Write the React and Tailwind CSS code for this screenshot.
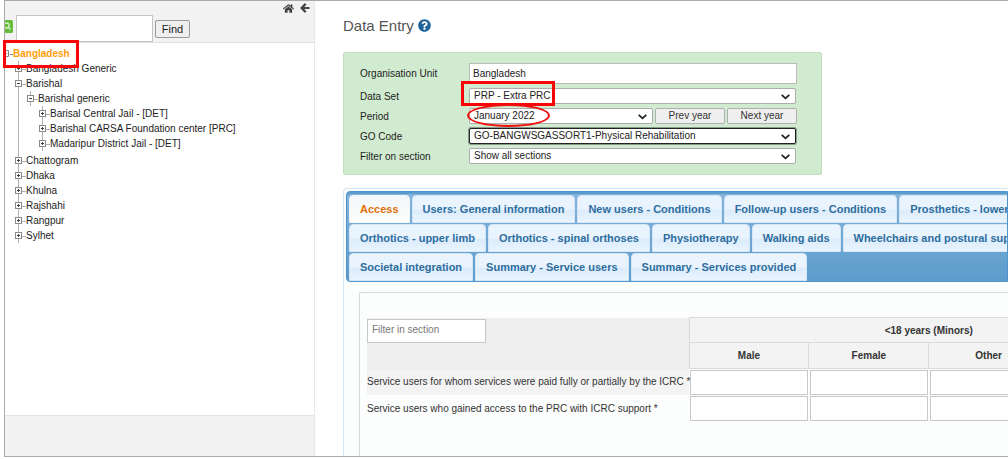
import React from "react";
import { FaHome, FaQuestionCircle } from "react-icons/fa";

const tree = [
  { name: "Bangladesh Generic" },
  {
    name: "Barishal",
    children: [
      {
        name: "Barishal generic",
        children: [
          { name: "Barisal Central Jail - [DET]" },
          { name: "Barishal CARSA Foundation center [PRC]" },
          { name: "Madaripur District Jail - [DET]" },
        ],
      },
    ],
  },
  { name: "Chattogram" },
  { name: "Dhaka" },
  { name: "Khulna" },
  { name: "Rajshahi" },
  { name: "Rangpur" },
  { name: "Sylhet" },
];

const tabRows = [
  ["Access", "Users: General information", "New users - Conditions", "Follow-up users - Conditions", "Prosthetics - lower limb"],
  ["Orthotics - upper limb", "Orthotics - spinal orthoses", "Physiotherapy", "Walking aids", "Wheelchairs and postural support"],
  ["Societal integration", "Summary - Service users", "Summary - Services provided"],
];

const columns = ["Male", "Female", "Other", "Total"];

const dataRows = [
  "Service users for whom services were paid fully or partially by the ICRC *",
  "Service users who gained access to the PRC with ICRC support *",
];

function Toggle({ open }) {
  return (
    <svg className="shrink-0" width="11" height="15" viewBox="0 0 11 15" fill="none" stroke="#8a8a8a" aria-hidden="true">
      <path d="M3.5 0V4M3.5 11V15M7 8.5H11" stroke="#b0b0b0" />
      <rect x="0.5" y="4.5" width="6" height="6" fill="#fff" />
      <path d={open ? "M2 7.5H5" : "M2 7.5H5M3.5 6V9"} stroke="#444" />
    </svg>
  );
}

function TreeNode({ node }) {
  return (
    <li>
      <div className="flex h-[15px] items-center whitespace-nowrap">
        <button type="button" aria-label={"Toggle " + node.name} className="flex">
          <Toggle open={Boolean(node.children)} />
        </button>
        <a href="#unit">{node.name}</a>
      </div>
      {node.children && (
        <ul className="pb-px pl-3">
          {node.children.map((c) => (
            <TreeNode key={c.name} node={c} />
          ))}
        </ul>
      )}
    </li>
  );
}

function Sidebar() {
  return (
    <aside className="flex w-[310px] shrink-0 flex-col border-r border-[#e8e8e8] bg-white">
      <div className="h-[42px] border-b border-[#e0e0e0] bg-[#f2f2f2]">
        <div className="flex h-3.5 items-center justify-end gap-1.5 pr-1 text-[#444]">
          <a href="#home" aria-label="Home"><FaHome size={11} /></a>
          <a href="#back" aria-label="Hide menu">
            <svg width="10" height="10" viewBox="0 0 10 10" fill="none" stroke="currentColor" strokeWidth="2.200" aria-hidden="true">
              <path d="M5.700 0.900L1.600 5L5.700 9.100M1.800 5H9.500" />
            </svg>
          </a>
        </div>
        <form className="flex items-center" onSubmit={(e) => e.preventDefault()}>
          <svg width="8" height="13" viewBox="0 0 8 13" className="mb-1 shrink-0" aria-hidden="true">
            <path d="M0 0H6.500Q8 0 8 1.500V11.500Q8 13 6.500 13H0Z" fill="#66bd3c" />
            <circle cx="1.500" cy="5.500" r="2.500" fill="none" stroke="#d8f0c8" strokeWidth="1.300" />
            <path d="M3.500 7.500L5.500 9.500" stroke="#d8f0c8" strokeWidth="1.300" />
          </svg>
          <input aria-label="Search organisation units" className="ml-[3px] h-[27px] w-[137px] border border-[#c4c4c4] bg-white px-1 outline-none" />
          <button type="submit" className="ml-0.5 h-[18px] w-[35px] rounded-xs border border-[#999] bg-[#efefef] text-[11px] leading-4 text-[#222]">
            Find
          </button>
        </form>
      </div>
      <nav aria-label="Organisation units" className="flex-1 pt-[3px] text-[#222]">
        <div className="relative flex h-[15px] items-center">
          <svg className="shrink-0" width="8" height="15" viewBox="0 0 8 15" fill="none" stroke="#858585" aria-hidden="true">
            <path d="M0 4.500H3.500V10.500H0M0 7.500H2M5 8.500H8" />
          </svg>
          <a href="#unit" className="font-bold text-[#ff9d0a]">Bangladesh</a>
          <span className="pointer-events-none absolute -left-0.5 -top-1.5 z-10 h-7 w-[76px] border-3 border-[#fa0505]" />
        </div>
        <div className="relative pl-2.5">
          <span className="absolute bottom-2 left-[13px] top-0 w-px bg-[#b0b0b0]" />
          <ul className="relative">
            {tree.map((n) => (
              <TreeNode key={n.name} node={n} />
            ))}
          </ul>
        </div>
      </nav>
      <div className="h-[41px] border-t border-[#e4e4e4] bg-[#f2f2f2]" />
    </aside>
  );
}

function Select({ id, value, focused, className }) {
  return (
    <div className={"relative " + (className || "w-[327px]")}>
      <select
        id={id}
        defaultValue={value}
        className={
          "block h-4 w-full appearance-none rounded-xs border bg-white pl-1 leading-[14px] text-[#222] outline-none " +
          (focused ? "border-[#222] ring-1 ring-[#222]/40" : "border-[#adadad]")
        }
      >
        <option>{value}</option>
      </select>
      <svg className="pointer-events-none absolute right-1.5 top-1.5" width="9" height="6" viewBox="0 0 9 6" fill="none" stroke="#222" strokeWidth="1.800" aria-hidden="true">
        <path d="M0.700 0.800L4.500 4.300L8.300 0.800" />
      </svg>
    </div>
  );
}

function Row({ id, label, children }) {
  return (
    <div className="flex items-center">
      <label htmlFor={id} className="w-[109px] shrink-0">{label}</label>
      {children}
    </div>
  );
}

function EntryForm() {
  const yearButton = "h-4 w-[70px] rounded-xs border border-[#b0b0b0] bg-[#efefef] leading-[14px] text-[#333]";
  return (
    <form
      className="mt-4 flex w-[479px] flex-col gap-1 rounded-xs border border-[#bfe0bf] bg-[#d0ebd0] pb-2.5 pl-4 pt-2.5 text-[#222]"
      onSubmit={(e) => e.preventDefault()}
    >
      <Row id="unit" label="Organisation Unit">
        <input id="unit" readOnly defaultValue="Bangladesh" className="h-[21px] w-[328px] border border-[#bbb] bg-white px-[3px] outline-none" />
      </Row>
      <Row id="dataset" label="Data Set">
        <div className="relative">
          <Select id="dataset" value="PRP - Extra PRC" />
          <span className="pointer-events-none absolute -left-2 -top-[7px] h-[25px] w-[94px] border-3 border-[#fa0505]" />
        </div>
      </Row>
      <Row id="period" label="Period">
        <div className="relative flex gap-0.5">
          <Select id="period" value="January 2022" className="w-[184px]" />
          <button type="button" className={yearButton}>Prev year</button>
          <button type="button" className={yearButton}>Next year</button>
          <span className="pointer-events-none absolute -left-0.5 -top-1 h-[23px] w-[83px] rounded-[50%] border-2 border-[#f01010]" />
        </div>
      </Row>
      <Row id="gocode" label="GO Code">
        <Select id="gocode" value="GO-BANGWSGASSORT1-Physical Rehabilitation" focused />
      </Row>
      <Row id="section" label="Filter on section">
        <Select id="section" value="Show all sections" />
      </Row>
    </form>
  );
}

function Tabs() {
  return (
    <div role="tablist" className="flex flex-col gap-px overflow-hidden rounded-l border border-[#4f94cc] bg-linear-to-b from-[#84b4dc] to-[#5c9ccc] pl-0.5 pt-[3px] text-[11px] font-bold shadow-[inset_0_2px_0_#5c9ccc]">
      {tabRows.map((row) => (
        <div key={row[0]} className="flex gap-0.5">
          {row.map((t) => (
            <button
              key={t}
              type="button"
              role="tab"
              aria-selected={t === "Access"}
              className={
                "h-7 shrink-0 whitespace-nowrap rounded-t border px-2.5 " +
                (t === "Access"
                  ? "border-[#f5f8f9] bg-linear-to-b from-[#f3f7f9] to-[#fcfdfd] text-[#e17009]"
                  : "border-[#d5e6f5] bg-linear-to-b from-[#e9f4fe] from-50% via-[#dcecfc] via-55% to-[#e9f4fe] text-[#2e6e9e]")
              }
            >
              {t}
            </button>
          ))}
        </div>
      ))}
    </div>
  );
}

function DataTable() {
  return (
    <table className="w-[802px] table-fixed border-collapse text-[#333]">
      <colgroup>
        <col className="w-[322px]" />
        <col />
        <col />
        <col />
        <col />
      </colgroup>
      <thead>
        <tr className="h-[25px]">
          <td rowSpan={2} className="bg-[#eee] p-0 align-top">
            <input aria-label="Filter in section" placeholder="Filter in section" className="mt-px block h-6 w-[119px] border border-[#c8c8c8] bg-white px-1 pb-0.5 outline-none placeholder:text-[#777]" />
          </td>
          <th colSpan={4} className="border border-[#dadada] bg-[#f3f3f3] p-0">&lt;18 years (Minors)</th>
        </tr>
        <tr className="h-[26px]">
          {columns.map((c) => (
            <th key={c} className="border border-[#dadada] bg-[#f3f3f3] p-0">{c}</th>
          ))}
        </tr>
      </thead>
      <tbody>
        {dataRows.map((r, i) => (
          <tr key={r} className="h-[26px]">
            <td className={"whitespace-nowrap p-0 " + (i === 0 ? "bg-[#f3f3f3]" : "")}>{r}</td>
            {columns.map((c) => (
              <td key={c} className="p-0 pl-px pt-px">
                <input aria-label={r + " " + c} className="block h-[25px] w-[118px] border border-[#c8c8c8] bg-white outline-none" />
              </td>
            ))}
          </tr>
        ))}
      </tbody>
    </table>
  );
}

export default function App() {
  return (
    <div className="flex h-screen flex-col bg-white pb-0.5 pl-1 font-['Liberation_Sans',Arial,sans-serif] text-[10px] leading-[15px]">
      <div className="flex min-h-0 flex-1 border-b border-l border-t border-[#aaa]">
        <Sidebar />
        <main className="flex min-w-0 flex-1 flex-col overflow-hidden pl-7 pt-3.5">
          <h1 className="flex items-center gap-1 text-[15px] leading-[21px] text-[#555]">
            Data Entry
            <a href="#help" aria-label="Help"><FaQuestionCircle size={13} color="#20649b" /></a>
          </h1>
          <EntryForm />
          <div className="mt-[13px] flex min-h-0 flex-1 flex-col rounded-tl border-l border-t border-[#d5e6f2] bg-[#fcfdfd] pl-0.5 pt-0.5">
            <Tabs />
            <section className="ml-[13px] mt-2.5 min-h-0 flex-1 overflow-hidden rounded-tl-xs border-l border-t border-[#d8d8d8] pl-[7px] pt-6">
              <DataTable />
            </section>
          </div>
        </main>
      </div>
    </div>
  );
}
